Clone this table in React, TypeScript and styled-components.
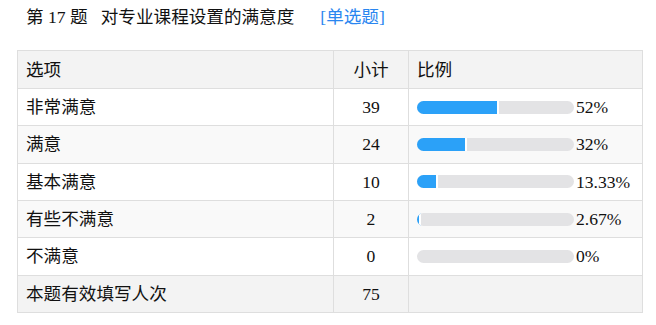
import React from "react";
import styled, { createGlobalStyle } from "styled-components";

const Global = createGlobalStyle`
  html, body { margin: 0; padding: 0; background: #fff; }
  body { font-family: "Liberation Serif", "Noto Sans CJK SC", serif; color: #111; }
`;

const Page = styled.div`
  padding: 0 13px 0 17px;
  font-size: 17.6px;
`;

const Title = styled.div`
  height: 35px;
  line-height: 35px;
  padding-left: 9px;
  white-space: pre;
  margin-bottom: 15px;
`;

const Tag = styled.span`
  color: #2a86f0;
  margin-left: 26px;
`;

const Table = styled.table`
  width: 626px;
  border-collapse: collapse;
  table-layout: fixed;
`;

const Row = styled.tr<{ $bg?: string }>`
  background: ${(p) => p.$bg || "#fff"};
  height: ${(p) => (p.$bg === "#f3f3f3" ? "37.5px" : "37.33px")};
`;

const HeadRow = styled.tr`
  background: #f3f3f3;
  height: 38px;
`;

const Cell = styled.td<{ $center?: boolean }>`
  border: 1px solid #dedede;
  padding: 0 0 0 8px;
  text-align: ${(p) => (p.$center ? "center" : "left")};
  vertical-align: middle;
  white-space: nowrap;
  line-height: 20px;
`;

const NumCell = styled(Cell)`
  padding: 0;
  text-align: center;
`;

const BarWrap = styled.div`
  display: flex;
  align-items: center;
  gap: 2px;
`;

const Track = styled.div`
  width: 157px;
  height: 13px;
  border-radius: 7px;
  background: #e3e3e5;
  overflow: hidden;
  display: flex;
`;

const Fill = styled.div<{ $on: boolean }>`
  height: 100%;
  background: #2ba1f8;
  box-sizing: content-box;
  border-right: ${(p) => (p.$on ? "2px solid #fff" : "none")};
`;

const data = [
  { name: "非常满意", n: 39, p: 52, label: "52%" },
  { name: "满意", n: 24, p: 32, label: "32%" },
  { name: "基本满意", n: 10, p: 13.33, label: "13.33%" },
  { name: "有些不满意", n: 2, p: 2.67, label: "2.67%" },
  { name: "不满意", n: 0, p: 0, label: "0%" },
];

export default function App() {
  return (
    <Page>
      <Global />
      <Title>
        第 17 题   对专业课程设置的满意度<Tag>[单选题]</Tag>
      </Title>
      <Table>
        <colgroup>
          <col style={{ width: 316 }} />
          <col style={{ width: 75 }} />
          <col />
        </colgroup>
        <tbody>
          <HeadRow>
            <Cell>选项</Cell>
            <NumCell>小计</NumCell>
            <Cell>比例</Cell>
          </HeadRow>
          {data.map((d, i) => (
            <Row key={d.name} $bg={i % 2 === 1 ? "#f9f9f9" : "#fff"}>
              <Cell>{d.name}</Cell>
              <NumCell>{d.n}</NumCell>
              <Cell>
                <BarWrap>
                  <Track>
                    <Fill
                      $on={d.p > 0}
                      style={{ width: d.p > 0 ? `calc(${d.p}% - 2px)` : 0 }}
                    />
                  </Track>
                  <span>{d.label}</span>
                </BarWrap>
              </Cell>
            </Row>
          ))}
          <Row $bg="#f3f3f3">
            <Cell>本题有效填写人次</Cell>
            <NumCell>75</NumCell>
            <Cell />
          </Row>
        </tbody>
      </Table>
    </Page>
  );
}
